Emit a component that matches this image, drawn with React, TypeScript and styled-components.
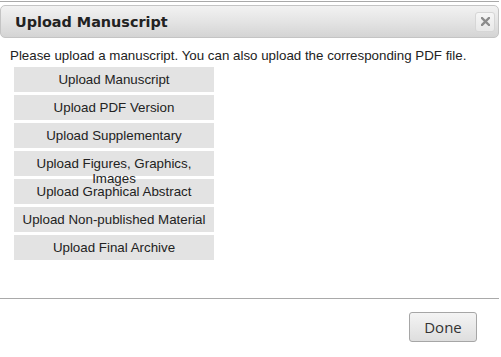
import React from 'react'
import styled, { createGlobalStyle } from 'styled-components'

const GlobalStyle = createGlobalStyle`
    html, body {
        margin: 0;
        padding: 0;
        background: #ffffff;
    }
`

const Dialog = styled.div`
    width: 499px;
    margin-top: 1px;
    border-top: 1px solid #a9a9a9;
    padding-top: 3px;
    font-family: "Liberation Sans", Arial, sans-serif;
    color: #222;
`

const TitleBar = styled.div`
    display: flex;
    align-items: center;
    justify-content: space-between;
    height: 31px;
    border: 1px solid #c4c4c4;
    border-radius: 5px;
    background: linear-gradient(to bottom, #f2f2f2 0%, #e4e4e4 50%, #d4d4d4 100%);
    padding: 0 3px 0 14px;
`

const Title = styled.h1`
    margin: 0;
    font-family: "DejaVu Sans", Verdana, sans-serif;
    font-size: 14.4px;
    font-weight: bold;
    color: #222;
`

const CloseButton = styled.button`
    display: grid;
    place-items: center;
    width: 20px;
    height: 20px;
    padding: 0;
    border: 1px solid #d6d6d6;
    border-radius: 3px;
    background: linear-gradient(to bottom, #f6f6f6, #e8e8e8);
    cursor: pointer;
`

const Body = styled.div`
    padding: 10px 0 0 10px;
`

const Intro = styled.p`
    margin: 0;
    font-size: 13.33px;
    line-height: 15px;
`

const ButtonList = styled.div`
    display: flex;
    flex-direction: column;
    gap: 3px;
    margin: 4px 0 0 4px;
    width: 200px;
`

const UploadButton = styled.div`
    box-sizing: border-box;
    height: 25px;
    padding: 5px 2px 0;
    background: #e3e3e3;
    font-size: 13.33px;
    line-height: 15px;
    text-align: center;
    color: #222;
    cursor: pointer;
`

// label sits above the following buttons' backgrounds when it wraps
const ButtonLabel = styled.span`
    position: relative;
    z-index: 1;
`

const Divider = styled.hr`
    margin: 38px 0 0;
    border: none;
    border-top: 1px solid #a9a9a9;
`

const Footer = styled.div`
    display: flex;
    justify-content: flex-end;
    padding: 13px 22px 0 0;
`

const DoneButton = styled.button`
    width: 68px;
    height: 30px;
    border: 1px solid #a6a6a6;
    border-radius: 3px;
    background: linear-gradient(to bottom, #f4f4f4, #dedede);
    font-family: "Open Sans", "DejaVu Sans", sans-serif;
    font-size: 15px;
    color: #333;
    cursor: pointer;
`

const uploads = [
    'Upload Manuscript',
    'Upload PDF Version',
    'Upload Supplementary',
    'Upload Figures, Graphics, Images',
    'Upload Graphical Abstract',
    'Upload Non-published Material',
    'Upload Final Archive',
]

const App = () => {
    return (
        <>
            <GlobalStyle />
            <Dialog>
                <TitleBar>
                    <Title>Upload Manuscript</Title>
                    <CloseButton aria-label="close">
                        <svg width="9" height="9" viewBox="0 0 9 9">
                            <path d="M1 1 L8 8 M8 1 L1 8" stroke="#8c8c8c" strokeWidth="2.4" strokeLinecap="square" />
                        </svg>
                    </CloseButton>
                </TitleBar>
                <Body>
                    <Intro>Please upload a manuscript. You can also upload the corresponding PDF file.</Intro>
                    <ButtonList>
                        {uploads.map(label => (
                            <UploadButton key={label}>
                                <ButtonLabel>{label}</ButtonLabel>
                            </UploadButton>
                        ))}
                    </ButtonList>
                </Body>
                <Divider />
                <Footer>
                    <DoneButton>Done</DoneButton>
                </Footer>
            </Dialog>
        </>
    )
}

export default App
